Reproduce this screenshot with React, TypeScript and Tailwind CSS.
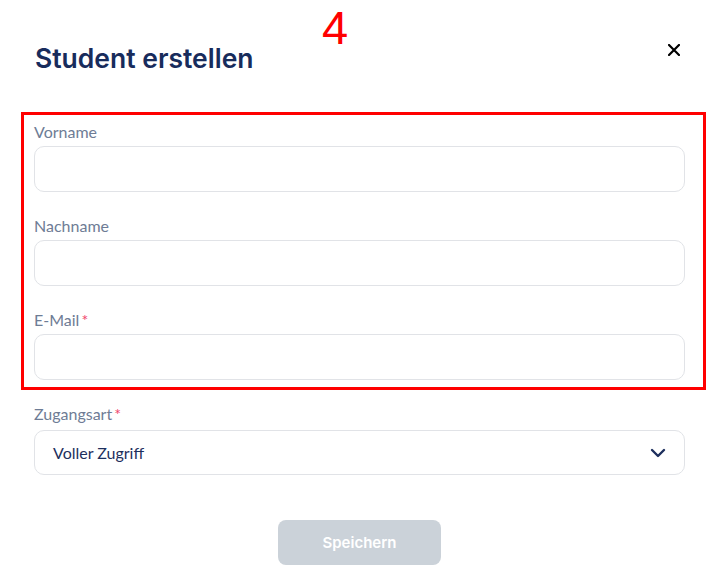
import React from "react";

function Field({ label, required }: { label: string; required?: boolean }) {
  return (
    <div className="flex flex-col gap-[4px]">
      <label className="text-[16px] leading-[20px] text-[#6e7c95] font-['Lato',sans-serif]">
        {label}
        {required && <span className="text-[#f0446a] ml-[2px]">*</span>}
      </label>
      <input className="h-[46px] w-full rounded-[10px] border border-[#e1e3e7] bg-white px-[18px] outline-none" />
    </div>
  );
}

export default function App() {
  return (
    <div className="relative min-h-[584px] w-[720px] bg-white font-['Inter',sans-serif]">
      <span className="absolute left-[322px] top-[4px] text-[47px] leading-none text-[#ff0000] font-['Liberation_Sans',sans-serif]">
        4
      </span>

      <div className="pl-[34px] pr-[35px] pt-[42px]">
        <div className="flex items-start justify-between">
          <h1 className="text-[26.5px] leading-[32px] font-semibold text-[#182c5c] pl-[1px]">Student erstellen</h1>
          <button className="mt-[2px] mr-[5px] flex h-[12px] w-[12px] items-center justify-center">
            <svg width="12" height="12" viewBox="0 0 12 12" fill="none">
              <path d="M1 1L11 11M11 1L1 11" stroke="#000" strokeWidth="2.2" strokeLinecap="square" />
            </svg>
          </button>
        </div>

        <div className="relative mt-[48px] flex flex-col gap-[24px]">
          <div className="pointer-events-none absolute left-[-13px] right-[-21px] top-[-10px] bottom-[-10px] border-[3px] border-[#ff0000]" />
          <Field label="Vorname" />
          <Field label="Nachname" />
          <Field label="E-Mail" required />
        </div>

        <div className="mt-[24px] flex flex-col gap-[6px]">
          <label className="text-[16px] leading-[20px] text-[#6e7c95] font-['Lato',sans-serif]">
            Zugangsart<span className="text-[#f0446a] ml-[2px]">*</span>
          </label>
          <div className="flex h-[45px] items-center justify-between rounded-[10px] border border-[#e1e3e7] bg-white pl-[18px] pr-[18px]">
            <span className="text-[16px] text-[#1d2f5d] font-['Lato',sans-serif]">Voller Zugriff</span>
            <svg width="16" height="10" viewBox="0 0 16 10" fill="none">
              <path d="M2 2L8 8L14 2" stroke="#1d2f5d" strokeWidth="2.4" strokeLinecap="round" strokeLinejoin="round" />
            </svg>
          </div>
        </div>

        <div className="mt-[45px] flex justify-center">
          <button className="h-[45px] w-[163px] rounded-[8px] bg-[#cbd2d9] pt-[2px] text-[15px] font-semibold text-white">
            Speichern
          </button>
        </div>
      </div>
    </div>
  );
}
